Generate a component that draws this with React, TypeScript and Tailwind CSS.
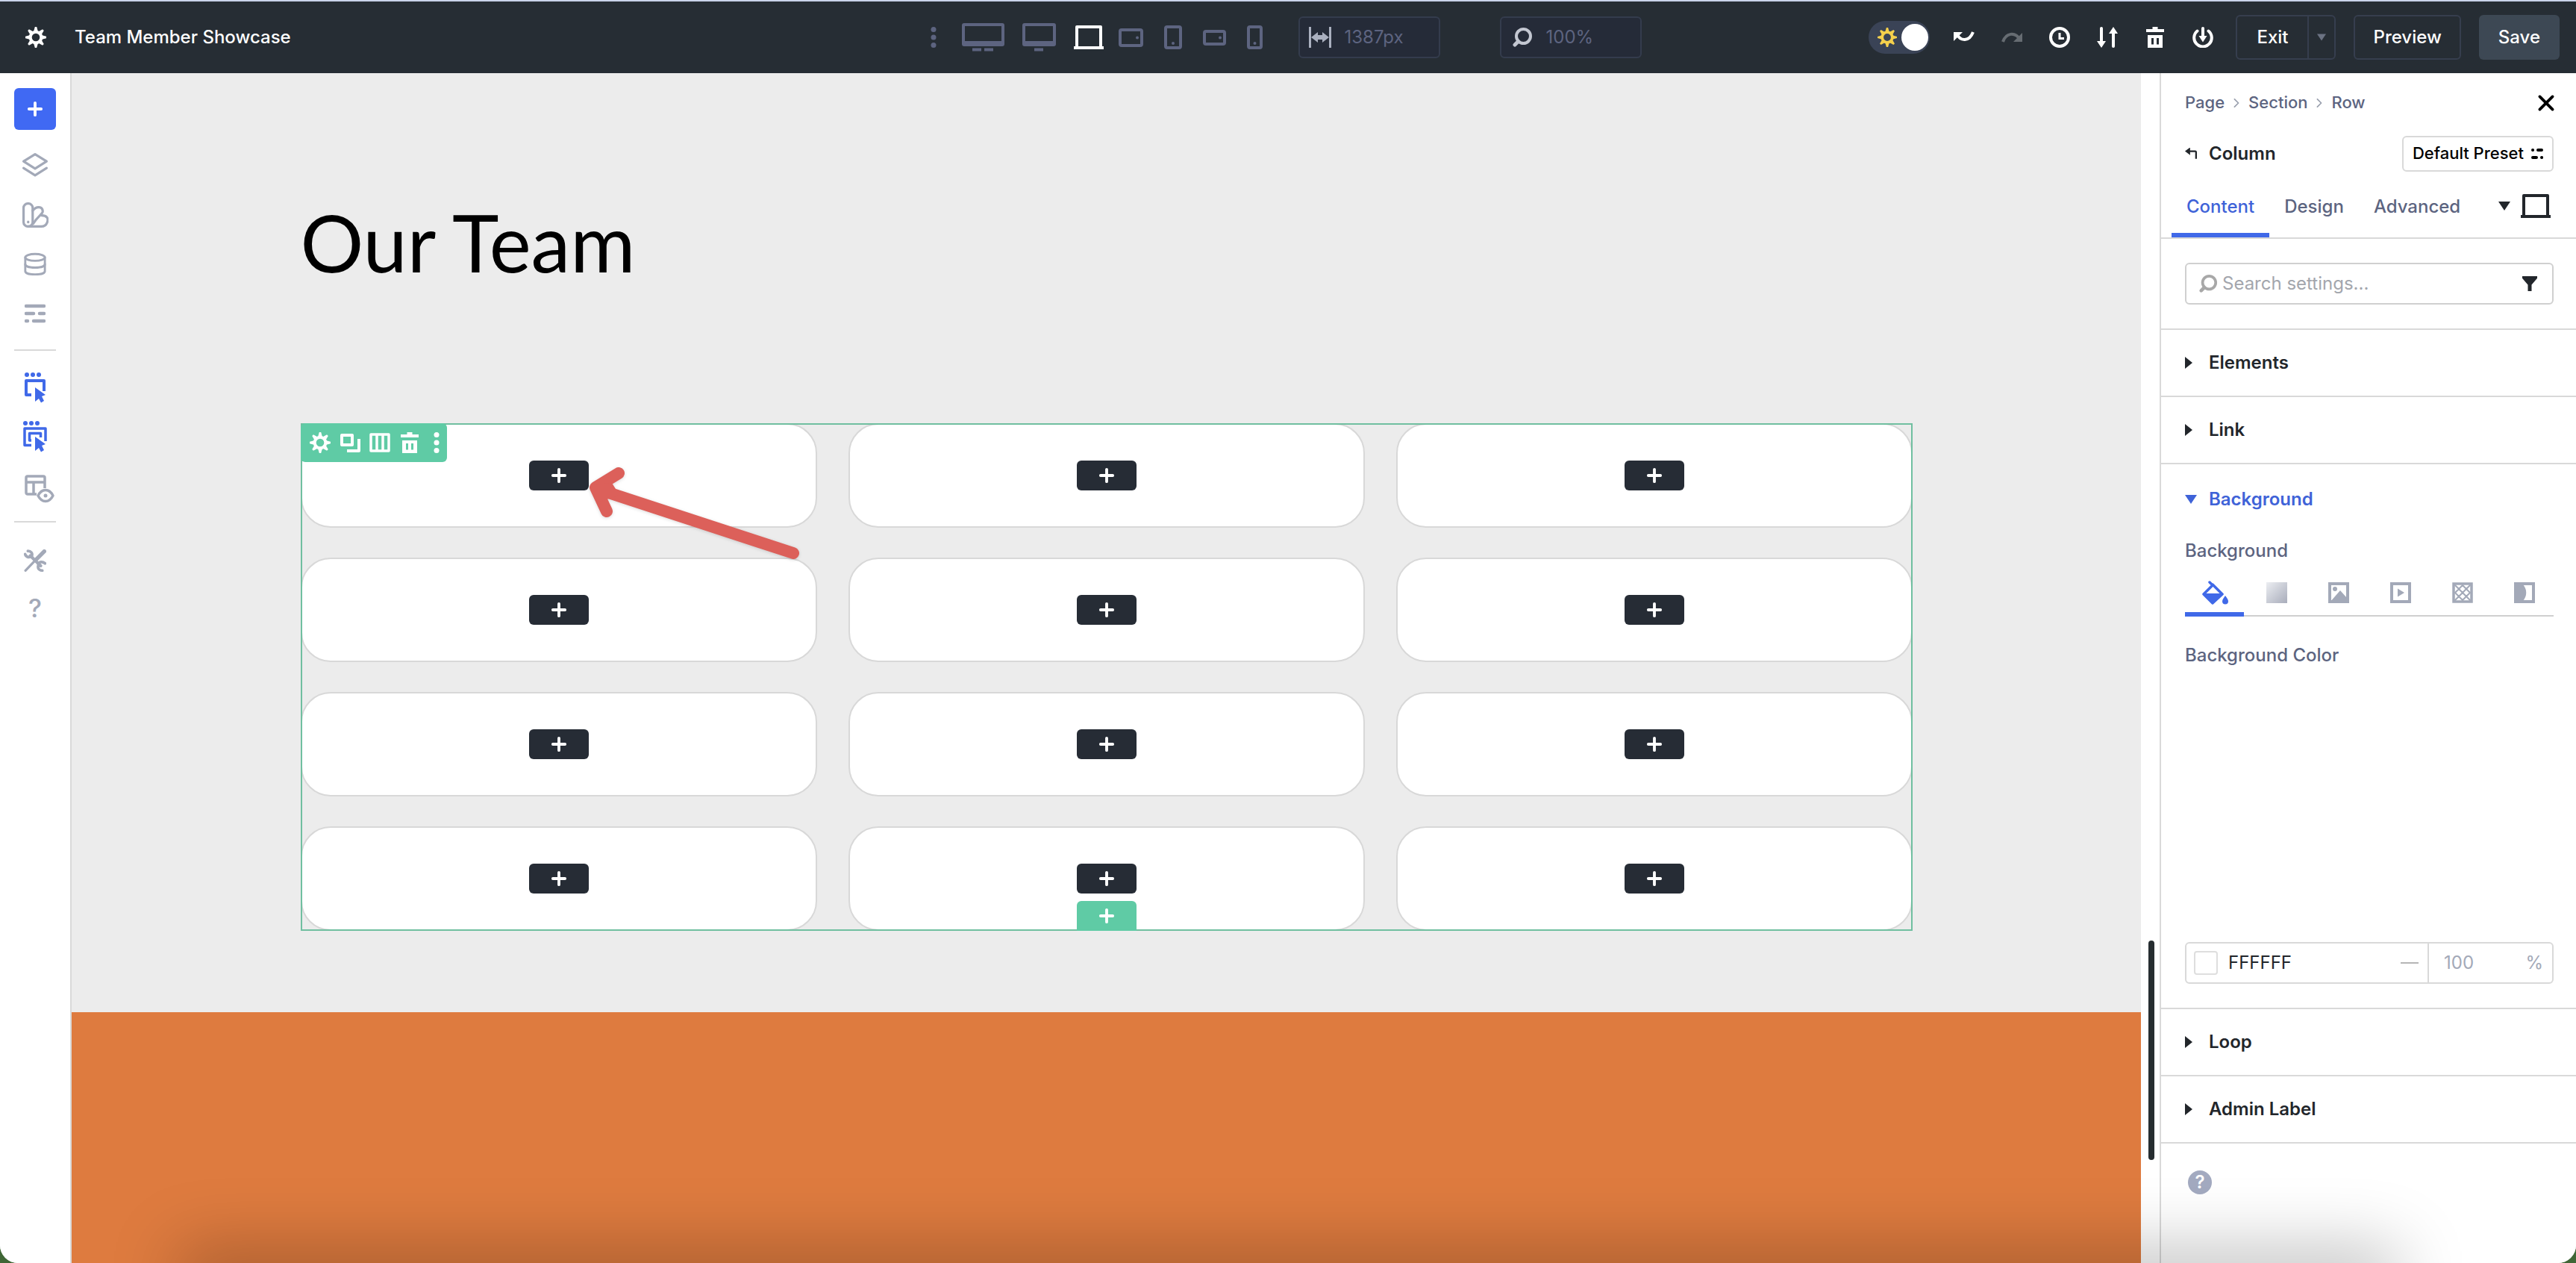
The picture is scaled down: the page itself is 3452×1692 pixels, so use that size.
import React from "react";

interface IconProps {
  className?: string;
  children?: React.ReactNode;
}

// All icons are drawn on the same 28 unit grid
function Icon({ className = "size-7", children }: IconProps) {
  return (
    <svg
      xmlns="http://www.w3.org/2000/svg"
      viewBox="0 0 28 28"
      className={`shrink-0 ${className}`}
      fill="none"
      stroke="currentColor"
      strokeWidth="3"
      strokeLinecap="round"
      strokeLinejoin="round"
      aria-hidden="true"
    >
      {children}
    </svg>
  );
}

const GEAR_ANGLES = [0, 45, 90, 135, 180, 225, 270, 315];

function GearIcon({ className }: IconProps) {
  return (
    <Icon className={className}>
      <circle cx="14" cy="14" r="7.3" strokeWidth="4" />
      {GEAR_ANGLES.map((angle) => (
        <path
          key={angle}
          d="M11 6.5 12.8 0h2.4L17 6.5z"
          fill="currentColor"
          stroke="none"
          transform={`rotate(${angle} 14 14)`}
        />
      ))}
    </Icon>
  );
}

function PlusIcon({ className }: IconProps) {
  return (
    <Icon className={className}>
      <path d="M14 4.5v19M4.5 14h19" strokeWidth="4.5" />
    </Icon>
  );
}

function DotsIcon({ className }: IconProps) {
  return (
    <Icon className={className}>
      <g fill="currentColor" stroke="none">
        <circle cx="14" cy="3.5" r="3.5" />
        <circle cx="14" cy="14" r="3.5" />
        <circle cx="14" cy="24.5" r="3.5" />
      </g>
    </Icon>
  );
}

function TrashIcon({ className }: IconProps) {
  return (
    <Icon className={className}>
      <path
        d="M10.5 0h7v3H26v4H2V3h8.5zM4 11h20v17H4zM9 15v8.5h3V15zM16 15v8.5h3V15z"
        fill="currentColor"
        fillRule="evenodd"
        stroke="none"
      />
    </Icon>
  );
}

function SearchIcon({ className }: IconProps) {
  return (
    <Icon className={className}>
      <circle cx="15.5" cy="12.5" r="9.5" strokeWidth="4" />
      <path d="M8.5 19.5 4 24" strokeWidth="5" />
    </Icon>
  );
}

function LaptopIcon({ className }: IconProps) {
  return (
    <svg
      viewBox="0 0 40 32"
      className={`shrink-0 ${className}`}
      fill="none"
      stroke="currentColor"
      strokeWidth="4"
      aria-hidden="true"
    >
      <path d="M4 28V2h32v26" strokeLinejoin="round" />
      <path d="M0 30h40" />
    </svg>
  );
}

function CaretIcon({ className }: IconProps) {
  return (
    <svg viewBox="0 0 16 12" className={className} aria-hidden="true">
      <path d="M0 0h16L8 12z" fill="currentColor" />
    </svg>
  );
}

interface MonitorProps {
  width: number;
  feet: number[];
}

function MonitorIcon({ width, feet }: MonitorProps) {
  return (
    <svg
      width={width}
      height="38"
      fill="none"
      stroke="currentColor"
      strokeWidth="4"
      aria-hidden="true"
    >
      <rect x="2" y="2" width={width - 4} height="27" rx="1" />
      <path d={`M2 27h${width - 4}`} strokeWidth="6" />
      {feet.map((x) => (
        <path key={x} d={`M${x} 35.5h12`} strokeWidth="4" />
      ))}
    </svg>
  );
}

interface HandheldProps {
  width: number;
  height: number;
}

function HandheldIcon({ width, height }: HandheldProps) {
  const wide = width > height;
  return (
    <svg
      width={width}
      height={height}
      fill="none"
      stroke="currentColor"
      strokeWidth="4"
      aria-hidden="true"
    >
      <rect x="2" y="2" width={width - 4} height={height - 4} rx="2" />
      <circle
        cx={wide ? width - 8 : width / 2}
        cy={wide ? height / 2 : height - 8}
        r="2"
        fill="currentColor"
        stroke="none"
      />
    </svg>
  );
}

const devices = [
  {
    name: "Ultra wide",
    className: "",
    icon: <MonitorIcon width={57} feet={[14, 30]} />,
  },
  {
    name: "Widescreen",
    className: "",
    icon: <MonitorIcon width={45} feet={[16]} />,
  },
  {
    name: "Desktop",
    className: "text-white",
    icon: <LaptopIcon className="h-8 w-10" />,
  },
  {
    name: "Tablet wide",
    className: "-ml-1",
    icon: <HandheldIcon width={33} height={25} />,
  },
  {
    name: "Tablet",
    className: "ml-1",
    icon: <HandheldIcon width={24} height={32} />,
  },
  {
    name: "Phone wide",
    className: "ml-1",
    icon: <HandheldIcon width={31} height={21} />,
  },
  {
    name: "Phone",
    className: "ml-1",
    icon: <HandheldIcon width={21} height={32} />,
  },
];

const headerActions = [
  {
    name: "Undo",
    className: "text-white",
    icon: (
      <Icon>
        <path d="M4 9c5 11 17 11 22-2" strokeLinecap="butt" strokeWidth="4" />
        <path d="M0 7h12L0 19z" fill="currentColor" stroke="none" />
      </Icon>
    ),
  },
  {
    name: "Redo",
    className: "text-[#666c72]",
    icon: (
      <Icon>
        <path d="M2 20C6 8 18 6 25 17" strokeLinecap="butt" strokeWidth="4" />
        <path d="M28 8v12H16z" fill="currentColor" stroke="none" />
      </Icon>
    ),
  },
  {
    name: "History",
    className: "text-white",
    icon: (
      <Icon>
        <circle cx="14" cy="14" r="12" strokeWidth="4" />
        <path d="M14 8v7.5h6" strokeLinecap="butt" strokeLinejoin="miter" />
      </Icon>
    ),
  },
  {
    name: "Portability",
    className: "text-white",
    icon: (
      <Icon>
        <path d="M6 2v18M22 26V8" strokeWidth="4" />
        <path
          d="M0 19h12L6 28zM16 9h12l-6-9z"
          fill="currentColor"
          stroke="none"
        />
      </Icon>
    ),
  },
  { name: "Clear layout", className: "text-white", icon: <TrashIcon /> },
  {
    name: "Power",
    className: "text-white",
    icon: (
      <Icon>
        <path d="M6.5 5.5a11.8 11.8 0 1 0 15 0" strokeWidth="4" />
        <path d="M14 2v11" strokeWidth="4" />
        <path d="M8.500 12h11L14 20.500z" fill="currentColor" stroke="none" />
      </Icon>
    ),
  },
];

function Header() {
  return (
    <header className="flex items-center justify-between gap-8 h-[98px] pl-1.5 pr-[22px] bg-[#262d34] border-t-2 border-[#c9d3ea] text-white text-2xl font-medium">
      <div className="flex items-center flex-1">
        <button type="button" aria-label="Settings" className="px-7">
          <GearIcon />
        </button>
        <h1 className="pl-2.5">Team Member Showcase</h1>
      </div>

      <div className="flex items-center text-[#5d6480]">
        <button type="button" aria-label="More views" className="mr-6">
          <DotsIcon />
        </button>
        <div className="flex items-center gap-6">
          {devices.map((device) => (
            <button
              key={device.name}
              type="button"
              aria-label={device.name}
              className={device.className}
            >
              {device.icon}
            </button>
          ))}
        </div>
        <label className="flex items-center gap-[18px] ml-12 w-[190px] h-14 pl-3 border-2 border-[#343c4d] rounded-md bg-[#252b38]">
          <svg
            viewBox="0 0 30 28"
            className="w-[30px] h-7 shrink-0 text-[#aab0bf]"
            fill="currentColor"
            aria-hidden="true"
          >
            <path d="M0 0h3v28H0zM27 0h3v28h-3zM3 14l9-7v4h6V7l9 7-9 7v-4h-6v4z" />
          </svg>
          <input
            type="text"
            defaultValue="1387px"
            aria-label="Canvas width"
            className="w-full min-w-0 font-normal outline-none"
          />
        </label>
        <label className="flex items-center gap-[18px] ml-20 w-[190px] h-14 pl-3.5 border-2 border-[#343c4d] rounded-md bg-[#252b38]">
          <SearchIcon className="size-7 text-[#c3c7d1]" />
          <input
            type="text"
            defaultValue="100%"
            aria-label="Zoom"
            className="w-full min-w-0 font-normal outline-none"
          />
        </label>
      </div>

      <div className="flex items-center justify-end flex-1">
        <label className="flex items-center justify-between w-[82px] h-11 pl-3 pr-0.5 mr-8 rounded-full bg-[#3a4356]">
          <input
            type="checkbox"
            defaultChecked
            aria-label="Light mode"
            className="sr-only"
          />
          <GearIcon className="size-[26px] text-[#f5d04c]" />
          <span className="size-9 rounded-full bg-white" />
        </label>
        <div className="flex items-center gap-9 mr-[30px]">
          {headerActions.map((action) => (
            <button
              key={action.name}
              type="button"
              aria-label={action.name}
              className={action.className}
            >
              {action.icon}
            </button>
          ))}
        </div>
        <div className="flex h-[60px] mr-6 border-2 border-[#363e4e] rounded-md">
          <button type="button" className="px-[26px]">
            Exit
          </button>
          <button
            type="button"
            aria-label="Exit options"
            className="flex items-center justify-center w-9 border-l-2 border-[#363e4e]"
          >
            <CaretIcon className="w-3 h-2.5 text-[#6b7282]" />
          </button>
        </div>
        <button
          type="button"
          className="h-[60px] px-6 mr-6 border-2 border-[#363e4e] rounded-md"
        >
          Preview
        </button>
        <button type="button" className="h-[60px] px-[26px] rounded-md bg-[#3d4854]">
          Save
        </button>
      </div>
    </header>
  );
}

function Sidebar() {
  return (
    <nav
      aria-label="Builder tools"
      className="flex flex-col items-center w-24 shrink-0 pt-5 border-r-2 border-[#d9d9d9] bg-white text-[#a3a9b8]"
    >
      <button
        type="button"
        aria-label="Add"
        className="flex items-center justify-center size-14 rounded-md bg-[#4069f3] text-white"
      >
        <PlusIcon className="size-6" />
      </button>
      <div className="flex flex-col items-center gap-[34px] mt-8">
        <button type="button" aria-label="Layers" className="flex items-center h-8">
          <Icon className="size-9">
            <path d="M14 2 26 9.500 14 17 2 9.500z" strokeWidth="2.500" />
            <path d="M2 16.500 14 24l12-7.500" strokeWidth="2.500" />
          </Icon>
        </button>
        <button type="button" aria-label="Presets" className="flex items-center h-8">
          <Icon className="size-9">
            <g strokeWidth="2.5">
              <rect x="2" y="2" width="9.5" height="24" rx="4.5" />
              <path d="M11.5 9.5c4-5 10-4.5 10.5.5.3 3-5 5-10 13" />
              <path d="M21 14.5c5 0 7.5 3 5.5 7.5-1 2.5-3 4-6 4H7" />
              <path d="M6.8 21v.5" />
            </g>
          </Icon>
        </button>
        <button type="button" aria-label="Variables" className="flex items-center h-8">
          <Icon className="size-8">
            <g strokeWidth="2.5">
              <ellipse cx="14" cy="6" rx="11.5" ry="4" />
              <path d="M2.500 6v16c0 5.300 23 5.300 23 0V6" />
              <path d="M2.500 14c0 5.300 23 5.300 23 0" />
            </g>
          </Icon>
        </button>
        <button type="button" aria-label="Wireframe" className="flex items-center h-8">
          <Icon>
            <path
              d="M2 4h24M2 14h10M20 14h6M2 24h2M12 24h14"
              strokeWidth="4.5"
            />
          </Icon>
        </button>
      </div>
      <div className="w-14 h-0.5 mt-8 bg-[#d9d9d9]" />
      <div className="flex flex-col items-center gap-6 mt-[29px]">
        <button type="button" aria-label="Click mode" className="text-[#4069e8]">
          <svg viewBox="0 0 28 41" className="w-7 h-[41px]" aria-hidden="true">
            <g fill="currentColor">
              <circle cx="3" cy="3" r="3" />
              <circle cx="11" cy="3" r="3" />
              <circle cx="19" cy="3" r="3" />
              <path d="M14 20l14 10-5 2 3 6-4 2.500-3-5.500-5 4z" />
            </g>
            <path
              d="M9 30H2V11h24v14"
              fill="none"
              stroke="currentColor"
              strokeWidth="4"
              strokeLinejoin="round"
            />
          </svg>
        </button>
        <button type="button" aria-label="Hover mode" className="text-[#4069e8]">
          <svg viewBox="0 0 32 42" className="w-8 h-[42px]" aria-hidden="true">
            <g fill="currentColor">
              <circle cx="3" cy="3" r="3" />
              <circle cx="11" cy="3" r="3" />
              <circle cx="19" cy="3" r="3" />
              <path d="M16 21l14 10-5 2 3 6-4 2.500-3-5.500-5 4z" />
            </g>
            <path
              d="M11 32.500H2V10h28v17M11 26H8.500V16.500h15V22"
              fill="none"
              stroke="currentColor"
              strokeWidth="3.5"
              strokeLinejoin="round"
            />
          </svg>
        </button>
        <button
          type="button"
          aria-label="Layout visibility"
          className="mt-1.5 pl-3"
        >
          <svg
            viewBox="0 0 40 38"
            className="w-10 h-[38px]"
            fill="none"
            stroke="currentColor"
            strokeWidth="3.5"
            aria-hidden="true"
          >
            <path d="M16 26H4a2 2 0 0 1-2-2V4a2 2 0 0 1 2-2h21a2 2 0 0 1 2 2v14M2 10h25M12 10v16" />
            <path
              d="M18 28c5-10 15-10 20 0-5 10-15 10-20 0z"
              fill="white"
              strokeLinejoin="round"
            />
            <circle cx="28" cy="28" r="2.5" fill="currentColor" stroke="none" />
          </svg>
        </button>
      </div>
      <div className="w-14 h-0.5 mt-6 bg-[#d9d9d9]" />
      <button type="button" aria-label="Tools" className="mt-9">
        <Icon className="size-[30px]">
          <path d="M2 26.500 25 2.500" strokeWidth="3" />
          <path d="M16 12 25.500 2.500" strokeWidth="5" />
          <path d="M8 8l13 12.500" strokeWidth="4" />
          <path
            d="M5 2c4 0 6 3 5 6-3 3-7 2-8.500-2M18 20c0-4 4-6 8.500-2.500M18 20c-1 4 1 6 5 6.500"
            strokeWidth="3.5"
          />
        </Icon>
      </button>
      <button
        type="button"
        aria-label="Help"
        className="mt-[31px] text-[34px] leading-9 font-medium"
      >
        ?
      </button>
    </nav>
  );
}

const rowActions = [
  { name: "Row settings", icon: <GearIcon /> },
  {
    name: "Duplicate row",
    icon: (
      <Icon>
        <path d="M3 4h14v13H3z" strokeWidth="4" />
        <path d="M26 9v16H10" strokeWidth="4" strokeLinecap="butt" />
      </Icon>
    ),
  },
  {
    name: "Row columns",
    icon: (
      <Icon>
        <path d="M2 3h24v22H2zM10 3v22M18 3v22" strokeWidth="3.5" />
      </Icon>
    ),
  },
  { name: "Delete row", icon: <TrashIcon /> },
];

function AddButton() {
  return (
    <button
      type="button"
      aria-label="Add module"
      className="flex items-center justify-center w-20 h-10 rounded-md bg-[#262c35] text-white"
    >
      <PlusIcon className="size-6" />
    </button>
  );
}

function Canvas() {
  return (
    <main className="flex flex-col flex-1 min-w-0 bg-[#ececec]">
      <section className="w-full max-w-[2160px] mx-auto pt-[162px] pb-[109px]">
        <h2 className="font-[Lato,sans-serif] text-[106px] leading-[128px] text-black">
          Our Team
        </h2>

        <div className="relative mt-[179px]">
          <div className="grid grid-cols-3 gap-x-[42px] gap-y-10">
            {Array.from({ length: 12 }, (_, i) => (
              <div
                key={i}
                className="flex items-center justify-center h-[140px] rounded-[40px] border-2 border-[#d8d8d8] bg-white"
              >
                <AddButton />
              </div>
            ))}
          </div>
          <div className="absolute inset-0 border-2 border-[#70bfa0] pointer-events-none" />

          <div className="absolute top-0 left-0 flex items-center gap-3 h-[52px] pl-3 pr-1 rounded-md bg-[#5fcba5] text-white">
            {rowActions.map((action) => (
              <button key={action.name} type="button" aria-label={action.name}>
                {action.icon}
              </button>
            ))}
            <button type="button" aria-label="More row options" className="-mx-1">
              <DotsIcon />
            </button>
          </div>

          <button
            type="button"
            aria-label="Add row"
            className="absolute bottom-0 left-1/2 -translate-x-1/2 flex items-center justify-center w-20 h-10 rounded-t-md bg-[#5fcba5] text-white"
          >
            <PlusIcon className="size-6" />
          </button>

          <svg
            viewBox="0 0 300 140"
            className="absolute top-[50px] left-[375px] w-[300px] h-[140px] text-[#dc605a] drop-shadow-sm pointer-events-none"
            fill="none"
            stroke="currentColor"
            strokeWidth="16"
            strokeLinecap="round"
            strokeLinejoin="round"
            aria-hidden="true"
          >
            <path d="M22 38 285 124M51 17 20 36l15 32" />
            <path d="M14 33 42 30 52 46 24 56z" fill="currentColor" stroke="none" />
          </svg>
        </div>
      </section>
      <section className="flex-1 min-h-[336px] bg-[#de7b3f]" />
    </main>
  );
}

interface AccordionHeaderProps {
  title: string;
  open?: boolean;
}

function AccordionHeader({ title, open }: AccordionHeaderProps) {
  return (
    <button
      type="button"
      aria-expanded={!!open}
      className={
        open
          ? "flex items-center w-full h-[90px] pt-1 px-8 font-semibold text-[#3f63d8]"
          : "flex items-center w-full h-[90px] px-8 font-semibold text-[#22262b] border-b-2 border-[#d9d9d9]"
      }
    >
      <span className="w-8">
        {open ? (
          <CaretIcon className="w-4 h-3" />
        ) : (
          <svg viewBox="0 0 10 16" className="w-2.5 h-4" aria-hidden="true">
            <path d="M0 0l10 8-10 8z" fill="currentColor" />
          </svg>
        )}
      </span>
      {title}
    </button>
  );
}

const backgroundTypes = [
  {
    name: "Color",
    icon: (
      <svg viewBox="0 0 36 32" className="w-9 h-8" aria-hidden="true">
        <path
          d="M11 2l4 4-12 12 12 12 13-12L15 5"
          fill="none"
          stroke="currentColor"
          strokeWidth="3.5"
          strokeLinejoin="round"
          strokeLinecap="round"
        />
        <path
          d="M3 17h25L15 31zM32 20c2 3 4 5 4 7.500a4 4 0 0 1-8 0C28 25 30 23 32 20z"
          fill="currentColor"
        />
      </svg>
    ),
  },
  {
    name: "Gradient",
    icon: (
      <span className="block size-7 bg-linear-to-br from-[#eceef2] to-[#a9adbb]" />
    ),
  },
  {
    name: "Image",
    icon: (
      <Icon>
        <path d="M2 2h24v24H2z" strokeWidth="4" strokeLinejoin="miter" />
        <circle cx="9" cy="9" r="3" fill="currentColor" stroke="none" />
        <path d="M2 27 16 11l9 10v6z" fill="currentColor" stroke="none" />
      </Icon>
    ),
  },
  {
    name: "Video",
    icon: (
      <Icon>
        <path d="M2 2h24v24H2z" strokeWidth="4" strokeLinejoin="miter" />
        <path d="M10 8.500v11l9-5.500z" fill="currentColor" stroke="none" />
      </Icon>
    ),
  },
  {
    name: "Pattern",
    icon: (
      <Icon>
        <path d="M2 2h24v24H2z" strokeWidth="3.5" strokeLinejoin="miter" />
        <path
          d="M4 14 14 4M4 24 24 4M14 24l10-10M14 4l10 10M4 4l20 20M4 14l10 10"
          strokeWidth="2"
        />
      </Icon>
    ),
  },
  {
    name: "Mask",
    icon: (
      <Icon>
        <path d="M2 2h24v24H2z" strokeWidth="4" strokeLinejoin="miter" />
        <path d="M2 2h9c7 7 7 17 0 24H2z" fill="currentColor" stroke="none" />
      </Icon>
    ),
  },
];

function SettingsPanel() {
  return (
    <aside className="w-[558px] shrink-0 border-l-2 border-[#d9d9d9] bg-white text-2xl font-medium text-[#5c6480]">
      <div className="pt-6 border-b-2 border-[#d9d9d9]">
        <div className="flex items-center justify-between h-8 pl-8 pr-7">
          <nav aria-label="Breadcrumb" className="flex items-center gap-2.5 text-[22px]">
            <a href="#page">Page</a>
            <Icon className="size-3 text-[#9aa0ae]">
              <path d="M8 2l12 12L8 26" strokeWidth="4" />
            </Icon>
            <a href="#section">Section</a>
            <Icon className="size-3 text-[#9aa0ae]">
              <path d="M8 2l12 12L8 26" strokeWidth="4" />
            </Icon>
            <a href="#row">Row</a>
          </nav>
          <button type="button" aria-label="Close" className="text-black">
            <Icon className="size-6">
              <path d="M4 4l20 20M24 4 4 24" strokeWidth="4.5" />
            </Icon>
          </button>
        </div>

        <div className="flex items-center justify-between h-12 mt-7 px-8">
          <div className="flex items-center gap-4 text-[#22262b] font-semibold">
            <button type="button" aria-label="Back">
              <Icon className="size-4">
                <path d="M6 8h18q2 0 2 2v16" strokeLinecap="butt" strokeWidth="4" />
                <path d="M0 8 12-1v18z" fill="currentColor" stroke="none" />
              </Icon>
            </button>
            <h2>Column</h2>
          </div>
          <button
            type="button"
            className="flex items-center gap-2.5 h-12 -mr-0.5 px-3 border-2 border-[#d9d9d9] rounded-md text-[22px] text-black"
          >
            Default Preset
            <svg
              viewBox="0 0 16 14"
              className="w-4 h-3.5 shrink-0"
              stroke="currentColor"
              strokeWidth="4"
              strokeLinecap="round"
              aria-hidden="true"
            >
              <path d="M2 2h.1M9 2h5M2 12h5M14 12h.1" />
            </svg>
          </button>
        </div>

        <div className="flex items-center h-[88px] pl-3.5 pr-[34px]">
          <div role="tablist" className="flex h-full">
            <button
              type="button"
              role="tab"
              aria-selected="true"
              className="px-5 pt-3 border-b-6 border-[#4069e8] text-[#3f63d8]"
            >
              Content
            </button>
            <button
              type="button"
              role="tab"
              aria-selected="false"
              className="px-5 pt-1.5"
            >
              Design
            </button>
            <button
              type="button"
              role="tab"
              aria-selected="false"
              className="px-5 pt-1.5"
            >
              Advanced
            </button>
          </div>
          <button
            type="button"
            aria-label="Responsive view"
            className="flex items-center gap-3.5 ml-auto pt-1 text-[#22262b]"
          >
            <CaretIcon className="w-4 h-3" />
            <LaptopIcon className="h-8 w-10" />
          </button>
        </div>
      </div>

      <div className="pl-8 pr-[30px] py-8 border-b-2 border-[#d9d9d9]">
        <label className="flex items-center gap-1.5 h-14 pl-4 pr-5 border-2 border-[#d0d0d0] rounded-md font-normal">
          <SearchIcon className="size-[26px] text-[#a8a8a8]" />
          <input
            type="text"
            placeholder="Search settings..."
            aria-label="Search settings"
            className="flex-1 min-w-0 outline-none placeholder:text-[#a3a6ad]"
          />
          <Icon className="size-5 text-[#22262b]">
            <path
              d="M0 0h28v4L17.500 16v12h-7V16L0 4z"
              fill="currentColor"
              stroke="none"
            />
          </Icon>
        </label>
      </div>

      <AccordionHeader title="Elements" />
      <AccordionHeader title="Link" />
      <AccordionHeader title="Background" open />
      <div className="pl-8 pr-[30px] pb-8 border-b-2 border-[#d9d9d9]">
        <h3 className="h-8 mt-2.5 leading-8">Background</h3>
        <div
          role="tablist"
          className="relative grid grid-cols-6 gap-1 h-12 mt-6 text-[#a3a9b8]"
        >
          <div className="absolute inset-x-0 bottom-0 h-0.5 bg-[#cfcfcf]" />
          {backgroundTypes.map((type, i) => (
            <button
              key={type.name}
              type="button"
              role="tab"
              aria-label={type.name}
              aria-selected={i === 0}
              className={
                i === 0
                  ? "relative flex justify-center border-b-6 border-[#4069e8] text-[#4069e8]"
                  : "relative flex justify-center pt-0.5"
              }
            >
              {type.icon}
            </button>
          ))}
        </div>
        <h3 className="h-8 mt-9 leading-8">Background Color</h3>
        <div className="h-[368px]" />
        <div className="flex h-14 border-2 border-[#d9d9d9] rounded-md font-normal">
          <label className="flex items-center flex-1 min-w-0 pl-2.5 pr-3">
            <span className="size-8 shrink-0 border-2 border-[#dedede] rounded-sm bg-white" />
            <input
              type="text"
              defaultValue="FFFFFF"
              aria-label="Background color value"
              className="flex-1 min-w-0 ml-3.5 text-[#22262b] outline-none"
            />
            <span className="w-6 h-0.5 bg-[#b5b5b5]" />
          </label>
          <label className="flex items-center w-[167px] shrink-0 pl-5 pr-3 border-l-2 border-[#d9d9d9] text-[#a3a9b8]">
            <input
              type="text"
              defaultValue="100"
              aria-label="Opacity"
              className="flex-1 min-w-0 outline-none"
            />
            %
          </label>
        </div>
      </div>
      <AccordionHeader title="Loop" />
      <AccordionHeader title="Admin Label" />
      <button
        type="button"
        aria-label="Help"
        className="flex items-center justify-center size-8 mt-9 ml-9 rounded-full bg-[#a3aac0] text-white font-semibold"
      >
        ?
      </button>
    </aside>
  );
}

function App() {
  return (
    <div className="min-h-screen bg-[#3f6636]">
      <div className="relative flex flex-col min-h-screen overflow-hidden rounded-b-3xl font-[Inter,sans-serif] bg-white">
        <Header />
        <div className="flex flex-1">
          <Sidebar />
          <Canvas />
          <div className="relative w-[25px] shrink-0 bg-white">
            <div className="absolute top-[1162px] left-2.5 w-2 h-[294px] rounded-full bg-[#262d30]" />
          </div>
          <SettingsPanel />
        </div>
        <div className="absolute top-full inset-x-[260px] h-10 shadow-[0_0_90px_20px_rgba(0,0,0,0.25)] pointer-events-none" />
      </div>
    </div>
  );
}

export default App;
